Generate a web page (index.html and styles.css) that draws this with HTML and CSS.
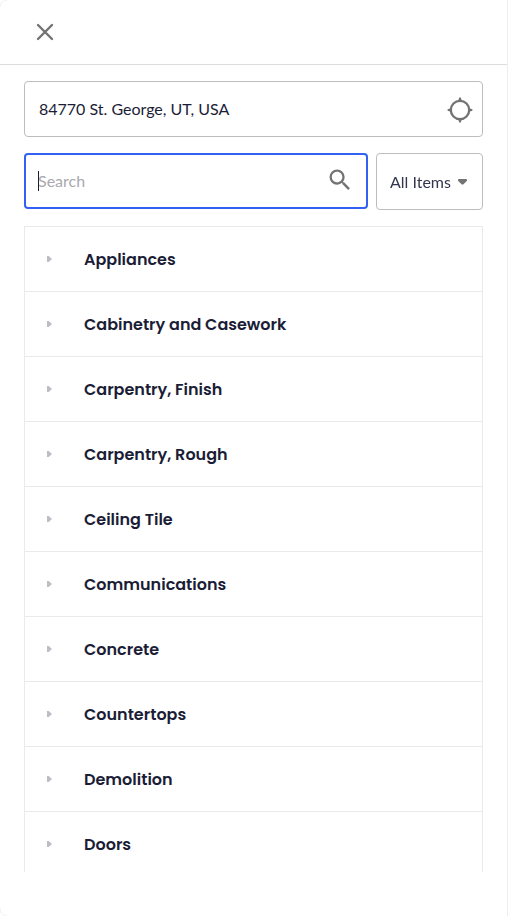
FILE: index.html
```html
<!DOCTYPE html>
<html lang="en">
<head>
<meta charset="utf-8">
<meta name="viewport" content="width=device-width, initial-scale=1">
<title>Items</title>
<link rel="stylesheet" href="styles.css">
</head>
<body>
<main class="panel">
  <header class="panel-header">
    <button class="icon-button close" type="button" aria-label="Close">
      <svg width="18" height="18" viewBox="0 0 18 18"><path d="M2 2L16 16M16 2L2 16" fill="none" stroke="currentColor" stroke-width="2.4" stroke-linecap="round"/></svg>
    </button>
  </header>
  <form class="filters">
    <div class="field">
      <input class="text-input" type="text" aria-label="Location" value="84770 St. George, UT, USA">
      <button class="icon-button field-icon locate" type="button" aria-label="Use my location">
        <svg width="26" height="26" viewBox="0 0 26 26"><circle cx="13" cy="13" r="9.2" fill="none" stroke="currentColor" stroke-width="2.3"/><path d="M12.2 .6h1.6l1.2 4h-4zM12.2 25.4h1.6l1.2-4h-4zM.6 12.2v1.6l4 1.2v-4zM25.4 12.2v1.6l-4 1.2v-4z" fill="currentColor"/></svg>
      </button>
    </div>
    <div class="search-row">
      <div class="field search-field">
        <input class="text-input search-input" type="text" aria-label="Search" placeholder="Search" autofocus>
        <span class="caret"></span>
        <button class="icon-button field-icon search" type="submit" aria-label="Submit search">
          <svg width="28" height="28" viewBox="0 0 24 24"><path fill="currentColor" d="M15.5 14h-.79l-.28-.27A6.47 6.47 0 0 0 16 9.5 6.5 6.5 0 1 0 9.5 16c1.61 0 3.09-.59 4.23-1.57l.27.28v.79l5 4.99L20.49 19l-4.99-5zm-6 0C7.01 14 5 11.99 5 9.5S7.01 5 9.5 5 14 7.01 14 9.5 11.99 14 9.5 14z"/></svg>
        </button>
      </div>
      <div class="field select-field">
        <select class="select" aria-label="Item filter"><option>All Items</option></select>
        <svg class="select-arrow" width="9" height="6" viewBox="0 0 9 6"><path d="M1 0h7Q9 0 9 1v.8L5.5 5.2Q4.500 6 3.500 5.200L0 1.800V1Q0 0 1 0z" fill="currentColor"/></svg>
      </div>
    </div>
  </form>
  <ul class="categories">
    <li><button class="category" type="button"><svg class="chevron" width="5" height="6" viewBox="0 0 5 6"><path d="M0 0h1.7L5 3 1.700 6H0z" fill="currentColor"/></svg>Appliances</button></li>
    <li><button class="category" type="button"><svg class="chevron" width="5" height="6" viewBox="0 0 5 6"><path d="M0 0h1.7L5 3 1.700 6H0z" fill="currentColor"/></svg>Cabinetry and Casework</button></li>
    <li><button class="category" type="button"><svg class="chevron" width="5" height="6" viewBox="0 0 5 6"><path d="M0 0h1.7L5 3 1.700 6H0z" fill="currentColor"/></svg>Carpentry, Finish</button></li>
    <li><button class="category" type="button"><svg class="chevron" width="5" height="6" viewBox="0 0 5 6"><path d="M0 0h1.7L5 3 1.700 6H0z" fill="currentColor"/></svg>Carpentry, Rough</button></li>
    <li><button class="category" type="button"><svg class="chevron" width="5" height="6" viewBox="0 0 5 6"><path d="M0 0h1.7L5 3 1.700 6H0z" fill="currentColor"/></svg>Ceiling Tile</button></li>
    <li><button class="category" type="button"><svg class="chevron" width="5" height="6" viewBox="0 0 5 6"><path d="M0 0h1.7L5 3 1.700 6H0z" fill="currentColor"/></svg>Communications</button></li>
    <li><button class="category" type="button"><svg class="chevron" width="5" height="6" viewBox="0 0 5 6"><path d="M0 0h1.7L5 3 1.700 6H0z" fill="currentColor"/></svg>Concrete</button></li>
    <li><button class="category" type="button"><svg class="chevron" width="5" height="6" viewBox="0 0 5 6"><path d="M0 0h1.7L5 3 1.700 6H0z" fill="currentColor"/></svg>Countertops</button></li>
    <li><button class="category" type="button"><svg class="chevron" width="5" height="6" viewBox="0 0 5 6"><path d="M0 0h1.7L5 3 1.700 6H0z" fill="currentColor"/></svg>Demolition</button></li>
    <li><button class="category" type="button"><svg class="chevron" width="5" height="6" viewBox="0 0 5 6"><path d="M0 0h1.7L5 3 1.700 6H0z" fill="currentColor"/></svg>Doors</button></li>
  </ul>
</main>
</body>
</html>
```
FILE: styles.css
```css
* {
  box-sizing: border-box;
}

body {
  margin: 0;
  background: #fff;
  color: #1b1d36;
  font-family: "Proxima Nova", Lato, sans-serif;
  font-size: 16px;
}

button,
input,
select {
  margin: 0;
  font: inherit;
  color: inherit;
}

svg {
  display: block;
}

.panel {
  display: flex;
  flex-direction: column;
  height: 100vh;
  padding-bottom: 44px;
  border-right: 1px solid #eee;
  border-radius: 8px 0 0 8px;
  box-shadow: 0 0 1px #ccc;
}

.panel-header {
  display: flex;
  align-items: center;
  flex: none;
  height: 65px;
  padding: 0 36px;
  border-bottom: 1px solid #ddd;
}

.icon-button {
  display: block;
  padding: 0;
  border: 0;
  background: none;
  color: #737373;
}

.filters {
  display: flex;
  flex-direction: column;
  flex: none;
  gap: 16px;
  padding: 16px 24px;
}

.field {
  position: relative;
}

.text-input {
  display: block;
  width: 100%;
  height: 56px;
  padding: 0 48px 2px 14px;
  border: 1px solid #bdbdbd;
  border-radius: 4px;
  outline: 0;
  background: #fff;
}

.search-input {
  padding-left: 12px;
  border: 2px solid #3162f4;
  caret-color: transparent;
}

.search-input::placeholder {
  color: #a9a9ae;
  opacity: 1;
}

.field-icon {
  position: absolute;
}

.locate {
  top: 16px;
  right: 10px;
}

.search {
  top: 13px;
  right: 14px;
}

.caret {
  position: absolute;
  top: 18px;
  left: 14px;
  width: 1px;
  height: 20px;
  background: #1b1d36;
}

.search-row {
  display: flex;
  gap: 8px;
}

.search-field {
  flex: 1;
}

.select-field {
  width: 107px;
}

.select {
  display: block;
  width: 100%;
  height: 57px;
  padding: 0 28px 0 13px;
  border: 1px solid #bdbdbd;
  border-radius: 4px;
  appearance: none;
  background: #fff;
  color: #34364d;
}

.select-arrow {
  position: absolute;
  top: 26px;
  right: 16px;
  color: #737373;
  pointer-events: none;
}

.categories {
  flex: 1;
  min-height: 0;
  margin: 0 24px;
  padding: 0;
  overflow: hidden;
  border: solid #e8eaed;
  border-width: 1px 1px 0;
  list-style: none;
}

.category {
  display: flex;
  align-items: center;
  gap: 32px;
  width: 100%;
  height: 65px;
  padding: 0 22px;
  border: 0;
  border-bottom: 1px solid #e8eaed;
  background: none;
  font-family: Poppins, Inter, sans-serif;
  font-size: 16px;
  font-weight: 600;
}

.chevron {
  color: #bcbec6;
}
```
